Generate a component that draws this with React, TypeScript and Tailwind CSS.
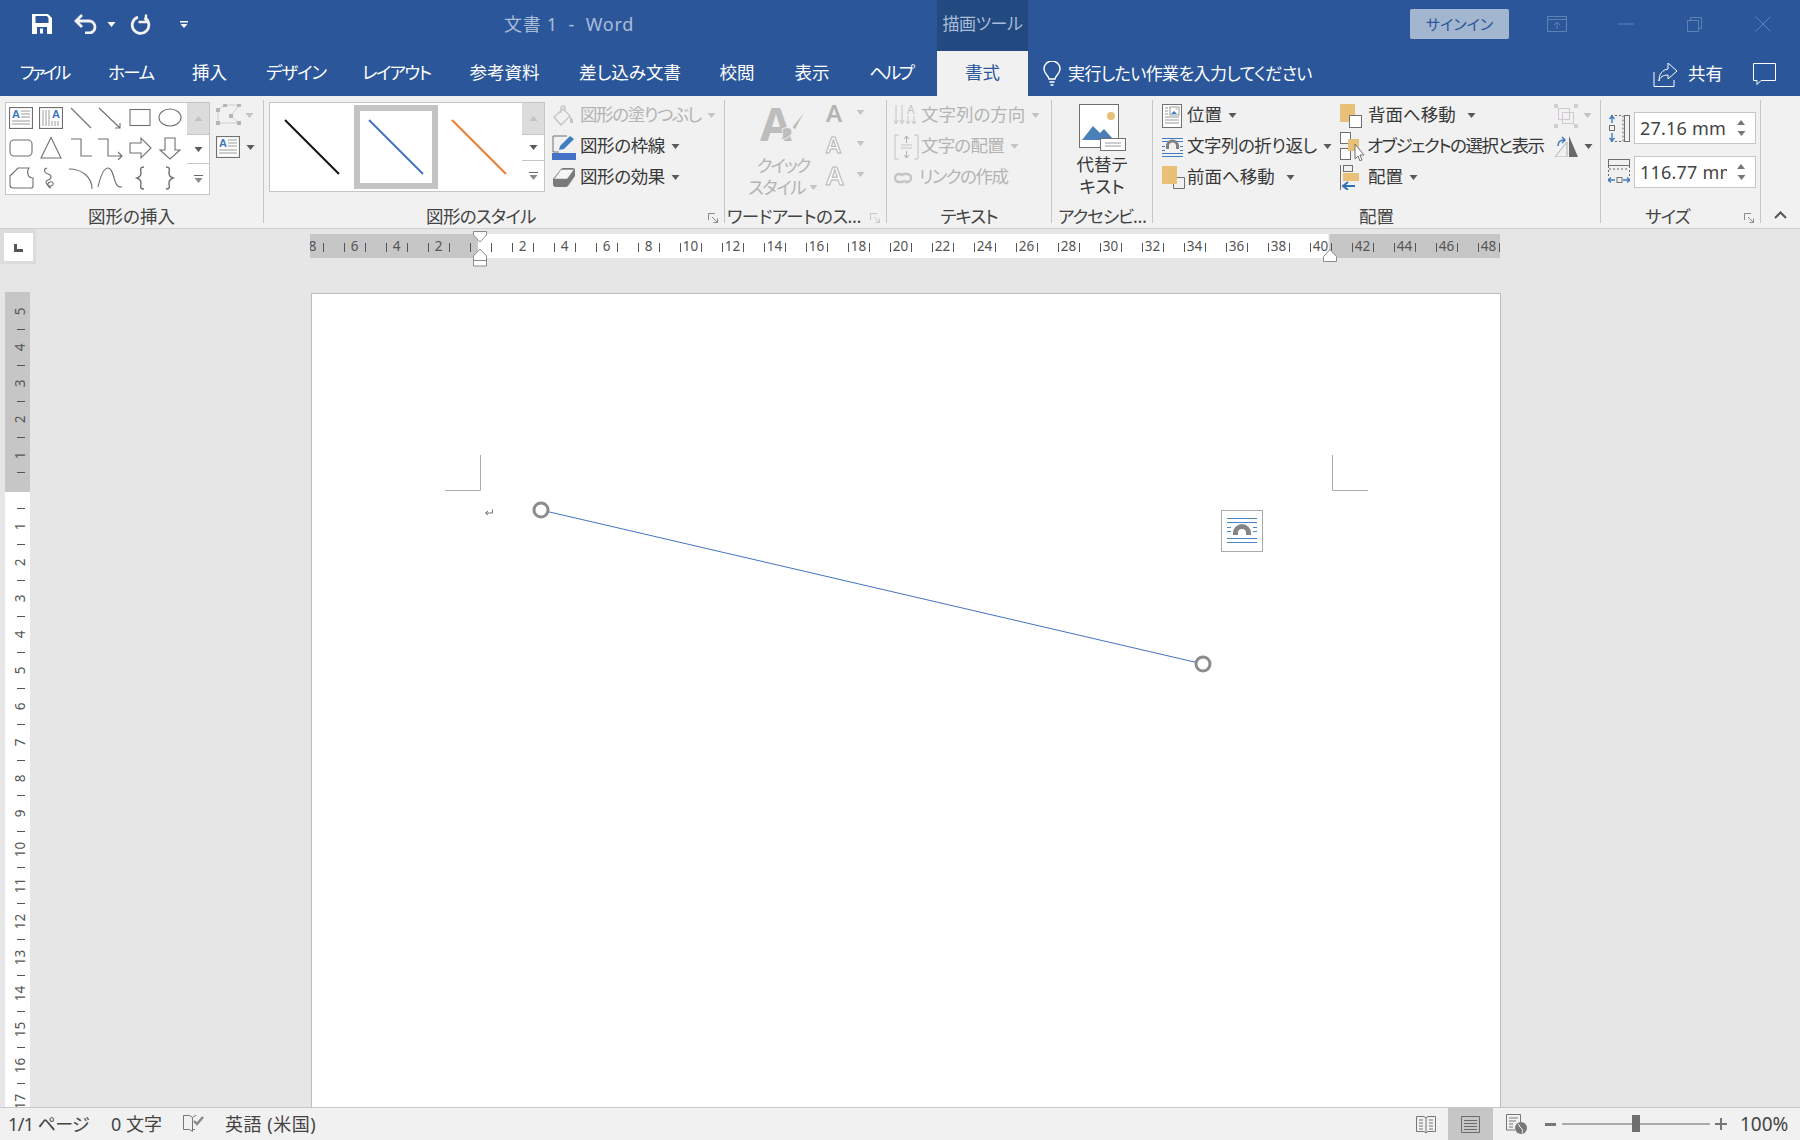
import React from 'react';

const G = '#707070';
const BLUE = '#3f7cc0';
const TAN = '#e8c078';
const DIS = '#c4c4c4';

const Caret = ({ c = '#5a5a5a', className = '' }: { c?: string; className?: string }) => (
  <svg width="9" height="5" viewBox="0 0 9 5" className={`shrink-0 ${className}`}>
    <path d="M.5 0h8L4.5 5z" fill={c} />
  </svg>
);

const Launcher = ({ c = '#8a8a8a' }: { c?: string }) => (
  <svg width="10" height="10" viewBox="0 0 10 10" fill="none" stroke={c} className="absolute right-[6px] top-[8px]">
    <path d="M.5 7V.5H7M4 4l5 5M9.5 5.5v4h-4" />
  </svg>
);

// ---- gallery shapes ----
const s26 = { width: 26, height: 24, viewBox: '0 0 26 24', fill: 'none', stroke: G, strokeWidth: 1.1 };

const TextBoxIcon = () => (
  <svg width="24" height="22" viewBox="0 0 24 22" fill="none" stroke={G} strokeWidth="1">
    <rect x=".5" y=".5" width="23" height="21" fill="#fff" strokeWidth="1.2" />
    <text x="3" y="11" fontSize="11" fontWeight="700" fill="#3a76bd" stroke="none" fontFamily="Liberation Sans">A</text>
    <path d="M12 4h9M12 7h9M12 10h9M3 14h18M3 17h18" stroke="#9a9a9a" />
  </svg>
);

const ShapeIcons: React.ReactNode[] = [
  <TextBoxIcon key="a" />,
  <svg key="b" width="24" height="22" viewBox="0 0 24 22" fill="none" stroke="#9a9a9a" strokeWidth="1">
    <rect x=".5" y=".5" width="23" height="21" stroke={G} strokeWidth="1.2" />
    <path d="M4 3v16M7 3v16M10 3v16M13 14v5M16 14v5M19 14v5" />
    <text x="13" y="11" fontSize="11" fontWeight="700" fill="#3a76bd" stroke="none" fontFamily="Liberation Sans">A</text>
  </svg>,
  <svg key="c" {...s26}><path d="M3 2l20 20" /></svg>,
  <svg key="d" {...s26}><path d="M2 2l21 20M23 17v5h-5" /></svg>,
  <svg key="e" {...s26}><rect x="3" y="3.5" width="20" height="16" /></svg>,
  <svg key="f" {...s26}><ellipse cx="13" cy="11.5" rx="11" ry="8.5" /></svg>,
  <svg key="g" {...s26}><rect x="2" y="4" width="22" height="16" rx="4" /></svg>,
  <svg key="h" {...s26}><path d="M13 1.5L23 22H3z" /></svg>,
  <svg key="i" {...s26}><path d="M3 3h10v17h11" /></svg>,
  <svg key="j" {...s26}><path d="M1 3h10v17h14M21 16l4 4-4 4" /></svg>,
  <svg key="k" {...s26}><path d="M3 7h11V2l10 10-10 10v-5H3z" /></svg>,
  <svg key="l" {...s26}><path d="M8 2h10v12h5L13 23 3 14h5z" /></svg>,
  <svg key="m" {...s26}><path d="M2 10l8-8h11c-3 4-1 10 4 10v8a2 2 0 0 1-2 2H5a3 3 0 0 1-3-3z" /></svg>,
  <svg key="n" {...s26}><path d="M9 2c-4 1-3 5 1 6s4 5 0 6-1 7 3 6 2-5-1-4-3 5 1 6" /></svg>,
  <svg key="o" {...s26}><path d="M1 3c13 0 23 8 23 20" /></svg>,
  <svg key="p" {...s26}><path d="M1 21C4 8 7 2 11 2s5 7 7 13 4 6 7 6" /></svg>,
  <svg key="q" {...s26} strokeWidth="1.4"><path d="M17 1c-5 0-3 3-3 6s-1 4-4 5c3 1 4 2 4 5s-2 6 3 6" /></svg>,
  <svg key="r" {...s26} strokeWidth="1.4"><path d="M9 1c5 0 3 3 3 6s1 4 4 5c-3 1-4 2-4 5s2 6-3 6" /></svg>,
];

const ScrollCol = () => (
  <div className="w-[22px] shrink-0 flex flex-col">
    <div className="h-[32px] flex items-center justify-center border-b border-[#c6c6c6] bg-[#dcdcdc]">
      <svg width="9" height="5" viewBox="0 0 9 5"><path d="M4.5 0l4 5h-8z" fill="#c2c2c2" /></svg>
    </div>
    <div className="flex-1 bg-white flex items-center justify-center border-b border-[#c6c6c6]"><Caret /></div>
    <div className="h-[30px] bg-white flex flex-col items-center justify-center gap-[2px]">
      <div className="w-[9px] h-px bg-[#6a6a6a]" />
      <Caret c="#8a8a8a" />
    </div>
  </div>
);

// ---- ribbon row icons ----
const FillIcon = () => (
  <svg width="22" height="22" viewBox="0 0 22 22" fill="none" stroke={DIS} strokeWidth="1.3">
    <path d="M11 4L2 12l7 8 9-9zM9 8V3a2 2 0 0 1 4 0v3" /><path d="M18 11l3 4v3h-3z" fill={DIS} stroke="none" />
  </svg>
);
const OutlineIcon = () => (
  <svg width="24" height="26" viewBox="0 0 24 26" fill="none">
    <path d="M1 18V2h14" stroke={G} /><path d="M1 18h6" stroke={G} />
    <path d="M7 16l1-4L18 2l4 3-10 10z" fill="#3f7cc0" /><rect x="0" y="19" width="24" height="7" fill="#4472c4" />
  </svg>
);
const EffectIcon = () => (
  <svg width="24" height="23" viewBox="0 0 24 23">
    <path d="M1 13L9 3a3 3 0 0 1 2-1h10a2 2 0 0 1 2 2v6l-7 10a3 3 0 0 1-2 1H4a3 3 0 0 1-3-3z" fill="#7a7a7a" />
    <path d="M2 13L9 3.5h13L16 12a2 2 0 0 1-2 1z" fill="#f6f6f6" stroke="#8a8a8a" strokeWidth=".6" />
  </svg>
);
const LinkIcon = () => (
  <svg width="18" height="12" viewBox="0 0 18 12" fill="none" stroke={DIS} strokeWidth="2.4">
    <path d="M7 2H5a4 4 0 0 0 0 8h3a4 4 0 0 0 3-2M11 10h2a4 4 0 0 0 0-8h-3a4 4 0 0 0-3 2" />
  </svg>
);
const DirectionIcon = () => (
  <svg width="25" height="24" viewBox="0 0 25 24" fill="none" stroke={DIS}>
    <path d="M2 1v18M0 16l2 4 2-4M8 1v18M6 16l2 4 2-4M14 12v8M12 17l2 3 2-3M20 12v8M18 17l2 3 2-3" />
    <text x="13" y="10" fontSize="12" fill={DIS} stroke="none" fontFamily="Noto Sans">A</text>
  </svg>
);
const AlignTextIcon = () => (
  <svg width="25" height="26" viewBox="0 0 25 26" fill="none" stroke={DIS}>
    <path d="M5 1H1v24h4M20 1h4v24h-4M7 11h11M7 14h11" />
    <path d="M12.5 2v7M10 5l2.5-3L15 5M12.5 17v7M10 21l2.5 3 2.5-3" stroke="#aeaeae" />
  </svg>
);
const PositionIcon = () => (
  <svg width="20" height="24" viewBox="0 0 20 24" fill="none">
    <rect x=".5" y=".5" width="19" height="23" stroke={G} fill="#fff" />
    <path d="M3 4h3M3 7h3M3 10h3M3 13h14M3 16h14M3 19h14" stroke="#9a9a9a" />
    <rect x="8" y="3" width="9" height="8" stroke="#9a9a9a" />
    <circle cx="14.5" cy="5" r="1" fill={TAN} /><path d="M9 10l3-3 3 3z" fill={BLUE} />
  </svg>
);
const WrapIcon = () => (
  <svg width="21" height="22" viewBox="0 0 21 22" fill="none" stroke={BLUE}>
    <path d="M0 2.5h21M0 5.5h21M0 10.5h3M18 10.5h3M0 14.5h3M18 14.5h3M0 17.5h21M0 20.5h21" />
    <path d="M4 16v-3a6.5 6.5 0 0 1 13 0v3h-3v-3a3.5 3.5 0 0 0-7 0v3z" fill="#808080" stroke="none" transform="translate(0 -3)" />
  </svg>
);
const FrontIcon = () => (
  <svg width="23" height="23" viewBox="0 0 23 23" fill="none">
    <path d="M15 11.5h7.5v11h-11V17" stroke={G} /><rect x="0" y="0" width="15" height="18" fill={TAN} />
  </svg>
);
const BackIcon = () => (
  <svg width="22" height="24" viewBox="0 0 22 24" fill="none">
    <rect x="0" y="0" width="15" height="18" fill={TAN} /><rect x="9.5" y="11.5" width="12" height="12" fill="#fff" stroke={G} />
  </svg>
);
const SelectIcon = () => (
  <svg width="25" height="29" viewBox="0 0 25 29" fill="none">
    <rect x=".5" y=".5" width="10" height="11" fill="#fff" stroke={G} /><rect x=".5" y="16.5" width="10" height="11" fill="#fff" stroke={G} />
    <rect x="8" y="7" width="11" height="12" fill={TAN} />
    <path d="M15 12v15l3-3 2 5 2-1-2-5h4z" fill="#fff" stroke={G} />
  </svg>
);
const AlignIcon = () => (
  <svg width="20" height="25" viewBox="0 0 20 25" fill="none">
    <path d="M.5 0v25" stroke={G} /><rect x="3.5" y=".5" width="9" height="6" stroke={G} />
    <rect x="3" y="8" width="16" height="8" fill={TAN} />
    <path d="M15 21H4M8 17l-5 4 5 4" stroke="#2f72b5" strokeWidth="2" />
  </svg>
);
const GroupIcon = () => (
  <svg width="24" height="24" viewBox="0 0 24 24" fill="none" stroke="#d0c8d4">
    <rect x="4.5" y="4.5" width="11" height="11" /><rect x="8.5" y="8.5" width="11" height="11" />
    <path d="M0 0h4v4H0zM20 0h4v4h-4zM0 20h4v4H0zM20 20h4v4h-4z" fill="#cfcfcf" stroke="none" />
  </svg>
);
const RotateIcon = () => (
  <svg width="25" height="21" viewBox="0 0 25 21" fill="none">
    <path d="M13 6v15H1z" stroke="#b0b0b0" /><path d="M15 0v21h9z" fill="#6a6a6a" />
    <path d="M4 10c0-4 2-6 6-6M8 1l3 3-3 3" stroke="#3f7cc0" strokeWidth="1.5" />
  </svg>
);
const HeightIcon = () => (
  <svg width="22" height="27" viewBox="0 0 22 27" fill="none">
    <path d="M3 .5h12M3 26.5h12M15 .5v26" stroke="#666" strokeDasharray="2 2" />
    <rect x="16.5" y=".5" width="5" height="26" stroke={G} />
    <rect x="1.5" y="10.5" width="5" height="5" stroke={G} />
    <path d="M4 1v7M1.5 4L4 1l2.5 3M4 18v8M1.5 23L4 26l2.5-3" stroke="#3f7cc0" strokeWidth="1.4" />
  </svg>
);
const WidthIcon = () => (
  <svg width="22" height="26" viewBox="0 0 22 26" fill="none">
    <rect x=".5" y=".5" width="21" height="6" stroke={G} />
    <path d="M.5 7v12M21.5 7v12M1 10h20" stroke="#666" strokeDasharray="2 2" />
    <rect x="9" y="18.5" width="5" height="5" stroke={G} />
    <path d="M0 21h7M3 18.5L0 21l3 2.5M15 21h7M19 18.5l3 2.5-3 2.5" stroke="#3f7cc0" strokeWidth="1.4" />
  </svg>
);

const Row = ({ icon, label, slot, caretGap = 6, off = false, noCaret = false, track = '' }: {
  icon: React.ReactNode; label: string; slot: number; caretGap?: number; off?: boolean; noCaret?: boolean; track?: string;
}) => (
  <div className={`flex items-center h-[31px] whitespace-nowrap ${off ? 'text-[#b4b4b4]' : ''}`}>
    <div className="shrink-0 flex items-center" style={{ width: slot }}>{icon}</div>
    <span className={`mb-[2px] ${track}`}>{label}</span>
    {!noCaret && <span style={{ marginLeft: caretGap }}><Caret c={off ? DIS : '#5a5a5a'} /></span>}
  </div>
);

const Group = ({ w, label, children, launcher, labelClass = 'text-center', launcherColor }: {
  w: number; label: string; children: React.ReactNode; launcher?: boolean; labelClass?: string; launcherColor?: string;
}) => (
  <>
    <div className="flex flex-col shrink-0" style={{ width: w }}>
      <div className="h-[105px] flex">{children}</div>
      <div className={`relative h-[22px] leading-[22px] text-[17.5px] text-[#444] whitespace-nowrap ${labelClass}`}>
        {label}
        {launcher && <Launcher c={launcherColor} />}
      </div>
    </div>
    <div className="w-px h-[123px] bg-[#c6c6c6] shrink-0" />
  </>
);

const SizeInput = ({ value, icon }: { value: string; icon: React.ReactNode }) => (
  <div className="flex items-center h-[32px]">
    <div className="w-[33px] pl-[7px] shrink-0">{icon}</div>
    <div className="w-[122px] h-[32px] bg-white border border-[#c6c6c6] flex items-center pl-[5px] pr-[9px]">
      <div className="w-[87px] overflow-hidden whitespace-nowrap text-[18px] tracking-[0.2px] text-[#444]">{value}</div>
      <div className="flex flex-col gap-[6px] shrink-0 ml-auto">
        <svg width="8" height="5" viewBox="0 0 8 5"><path d="M4 0l4 5H0z" fill="#777" /></svg>
        <Caret c="#777" />
      </div>
    </div>
  </div>
);

const TitleBar = () => (
  <div className="h-[51px] shrink-0 bg-[#2b579a] flex">
    <div className="w-[937px] shrink-0 flex items-center pb-[3px]">
      <svg width="20" height="20" viewBox="0 0 20 20" className="ml-[32px]">
        <path fillRule="evenodd" d="M0 0h16l4 4v16H0zM3.5 2v7h13V4L15 2zM5 13v7h10v-7z" fill="#fff" />
        <rect x="8" y="14.5" width="3" height="5" fill="#fff" />
      </svg>
      <svg width="23" height="20" viewBox="0 0 23 20" fill="none" stroke="#f2f2f2" strokeWidth="2.8" className="ml-[22px]">
        <path d="M2 7h13a6 6 0 0 1 0 12h-4M8 1L2 7l6 6" />
      </svg>
      <Caret c="#fff" className="ml-[10px]" />
      <svg width="21" height="21" viewBox="0 0 21 21" fill="none" stroke="#f2f2f2" strokeWidth="2.8" className="ml-[14px]">
        <path d="M8 3.2a8.3 8.3 0 1 0 6.5.6" />
        <path d="M16 .5V8H8.5" strokeWidth="2.4" />
      </svg>
      <svg width="8" height="7" viewBox="0 0 8 7" className="ml-[29px]">
        <path d="M0 0h8v1.4H0zM.5 3h7L4 7z" fill="#fff" />
      </svg>
      <div className="ml-[316px] text-[18px] text-[#a9bcd8] whitespace-pre tracking-[0.7px]">文書 1  -  Word</div>
    </div>
    <div className="w-[91px] shrink-0 bg-[#234a80] flex items-center justify-center pb-[3px] text-[17px] tracking-[-0.5px] text-[#a9bcd8] whitespace-nowrap">描画ツール</div>
    <div className="flex-1 flex items-center pb-[5px] pt-[2px]">
      <div className="ml-[382px] w-[99px] h-[30px] rounded-[2px] bg-[#a3b6d0] flex items-center justify-center text-[15px] text-[#2b579a]">サインイン</div>
      <svg width="20" height="16" viewBox="0 0 20 16" fill="none" stroke="#5f82b5" className="ml-[38px]">
        <path d="M.5.5h19v15H.5zM.5 3.5h19M10 13V6M7 9l3-3 3 3" />
      </svg>
      <svg width="16" height="2" viewBox="0 0 16 2" className="ml-[51px]"><path d="M0 1h16" stroke="#5f82b5" /></svg>
      <svg width="15" height="15" viewBox="0 0 15 15" fill="none" stroke="#5f82b5" className="ml-[53px]">
        <path d="M.5 3.5h11v11H.5zM3.5 3V.5h11v11H12" />
      </svg>
      <svg width="16" height="16" viewBox="0 0 16 16" fill="none" stroke="#5f82b5" className="ml-[53px]">
        <path d="M.5.5l15 15M15.5.5l-15 15" />
      </svg>
    </div>
  </div>
);

const tabs = [
  { t: 'ファイル', w: 50, c: 'tracking-[-3px]' }, { t: 'ホーム', w: 45, c: 'tracking-[-1.5px]' }, { t: '挿入', w: 35, c: '' },
  { t: 'デザイン', w: 57, c: 'tracking-[-1px]' }, { t: 'レイアウト', w: 68, c: 'tracking-[-1.6px]' }, { t: '参考資料', w: 71, c: '' },
  { t: '差し込み文書', w: 101, c: '' }, { t: '校閲', w: 36, c: '' }, { t: '表示', w: 36, c: '' }, { t: 'ヘルプ', w: 44, c: 'tracking-[-2.3px]' },
];

const TabBar = () => (
  <div className="h-[45px] shrink-0 bg-[#2b579a] flex items-center text-[17.5px] text-white">
    <div className="flex gap-[39px] pl-[19px] pb-[2px] w-[937px] shrink-0">
      {tabs.map((x) => (
        <div key={x.t} className={`whitespace-nowrap text-center ${x.c}`} style={{ width: x.w }}>{x.t}</div>
      ))}
    </div>
    <div className="w-[91px] h-full shrink-0 bg-[#f1f1f1] flex items-center justify-center pb-[2px] text-[#2b579a]">書式</div>
    <svg width="18" height="26" viewBox="0 0 18 26" fill="none" stroke="#fff" strokeWidth="1.4" className="ml-[15px] shrink-0">
      <path d="M6 18c0-3-5-5-5-10a8 8 0 0 1 16 0c0 5-5 7-5 10zM6.5 21h5M7.5 24h3" />
    </svg>
    <div className="ml-[7px] w-[242px] whitespace-nowrap text-[17px] tracking-[-0.6px]">実行したい作業を入力してください</div>
    <svg width="26" height="26" viewBox="0 0 26 26" fill="none" stroke="#fff" className="ml-[343px] shrink-0">
      <path d="M1 11v14.5h20V19" /><path d="M15 2l9 8-9 8v-4c-5 0-8 2-9 6 0-7 3-11 9-12z" />
    </svg>
    <div className="ml-[9px] whitespace-nowrap">共有</div>
    <svg width="23" height="24" viewBox="0 0 23 24" fill="none" stroke="#fff" className="ml-[30px] shrink-0">
      <path d="M.5 1.5h22v17H8l-4 4v-4H.5z" />
    </svg>
  </div>
);

const Ribbon = () => (
  <div className="h-[133px] shrink-0 bg-[#f1f1f1] border-b border-[#d0d0d0] flex pt-[4px] text-[17.5px] text-[#383838]">
    <Group w={263} label="図形の挿入">
      <div className="ml-[5px] mt-[2px] w-[205px] h-[93px] border border-[#c6c6c6] bg-white flex shrink-0">
        <div className="w-[180px] grid grid-cols-6 content-start">
          {ShapeIcons.map((ic, i) => (
            <div key={i} className="h-[30px] flex items-center justify-center">{ic}</div>
          ))}
        </div>
        <div className="ml-[2px] flex"><ScrollCol /></div>
      </div>
      <div className="ml-[6px] flex flex-col gap-[10px] pt-[4px]">
        <div className="flex items-center gap-[4px]">
          <svg width="25" height="22" viewBox="0 0 25 22" fill="none" stroke="#cfcfcf">
            <path d="M2 6l7-5h14l-8 11 8 7H2z" />
            <path d="M0 4h4v4H0zM7 0h4v3H7zM21 0h4v3h-4zM13 10h4v4h-4zM21 17h4v4h-4zM0 17h4v4H0z" fill="#b5b5b5" stroke="none" />
          </svg>
          <Caret c={DIS} />
        </div>
        <div className="flex items-center gap-[6px]"><TextBoxIcon /><Caret /></div>
      </div>
    </Group>

    <Group w={460} label="図形のスタイル" labelClass="text-center pr-[26px] tracking-[-0.7px]" launcher>
      <div className="ml-[5px] mt-[2px] w-[276px] h-[90px] border border-[#c6c6c6] bg-white flex shrink-0">
        <div className="w-[253px] flex items-center justify-between pl-[14px] pr-[15px]">
          <svg width="56" height="56" viewBox="0 0 56 56"><path d="M1 1l54 54" stroke="#111" strokeWidth="2" /></svg>
          <div className="w-[84px] h-[84px] border-[6px] border-[#c4c4c4] flex items-center justify-center">
            <svg width="56" height="56" viewBox="0 0 56 56"><path d="M1 1l54 54" stroke="#4472c4" strokeWidth="2" /></svg>
          </div>
          <svg width="56" height="56" viewBox="0 0 56 56"><path d="M1 1l54 54" stroke="#ed7d31" strokeWidth="2" /></svg>
        </div>
        <ScrollCol />
      </div>
      <div className="ml-[7px]">
        <Row icon={<FillIcon />} label="図形の塗りつぶし" slot={28} off track="tracking-[-1.4px]" />
        <Row icon={<OutlineIcon />} label="図形の枠線" slot={28} track="tracking-[-0.4px]" />
        <Row icon={<EffectIcon />} label="図形の効果" slot={28} track="tracking-[-0.4px]" />
      </div>
    </Group>

    <Group w={161} label="ワードアートのス…" labelClass="pl-[2px] tracking-[-0.6px]" launcher launcherColor="#c8c8c8">
      <div className="w-[96px] pl-[20px] flex flex-col items-center shrink-0 text-[#b4b4b4] leading-[22px]">
        <div className="relative w-[46px] h-[46px] mb-[8px]">
          <div className="text-[46px] leading-[46px] font-bold text-[#bdbdbd]">A</div>
          <svg width="26" height="34" viewBox="0 0 26 34" className="absolute right-0 top-[10px]">
            <path d="M26 0L12 17l3 3zM2 19c6-3 10-1 10 3s-6 7-12 8c3-2 3-6 2-11z" fill="#bdbdbd" stroke="#f1f1f1" />
          </svg>
        </div>
        <div className="whitespace-nowrap tracking-[-2px]">クイック</div>
        <div className="whitespace-nowrap flex items-center gap-[4px]"><span className="tracking-[-1.5px]">スタイル</span><Caret c={DIS} /></div>
      </div>
      <div className="ml-[5px] -mt-[3px]">
        {[
          'text-[24px] text-[#b4b4b4]',
          'text-[22px] text-white [-webkit-text-stroke:1px_#b4b4b4]',
          'text-[26px] text-white [-webkit-text-stroke:1px_#b4b4b4]',
        ].map((c, i) => (
          <div key={i} className="h-[31px] flex items-center">
            <div className={`w-[30px] font-semibold leading-none ${c}`}>A</div>
            <Caret c={DIS} />
          </div>
        ))}
      </div>
    </Group>

    <Group w={164} label="テキスト" labelClass="text-center tracking-[-1px]">
      <div className="pl-[7px]">
        <Row icon={<DirectionIcon />} label="文字列の方向" slot={27} off />
        <Row icon={<AlignTextIcon />} label="文字の配置" slot={27} off track="tracking-[-0.8px]" />
        <Row icon={<LinkIcon />} label="リンクの作成" slot={25} off noCaret track="tracking-[-1.5px]" />
      </div>
    </Group>

    <Group w={100} label="アクセシビ…" labelClass="text-center tracking-[-1px]">
      <div className="w-full flex flex-col items-center leading-[22px] pt-[4px]">
        <svg width="47" height="47" viewBox="0 0 47 47" fill="none" className="mb-[2px]">
          <rect x=".5" y=".5" width="39" height="43" fill="#fff" stroke={G} />
          <circle cx="32" cy="12" r="4" fill={TAN} />
          <path d="M3 36l11-14 7 7 4-4 10 11z" fill="#4a80b8" />
          <rect x="21.5" y="34.5" width="25" height="12" fill="#fff" stroke={G} />
          <path d="M26 39h16M26 42h16" stroke="#9a9a9a" />
        </svg>
        <div>代替テ</div>
        <div>キスト</div>
      </div>
    </Group>

    <Group w={447} label="配置">
      <div className="pl-[9px] w-[187px] shrink-0">
        <Row icon={<PositionIcon />} label="位置" slot={25} />
        <Row icon={<WrapIcon />} label="文字列の折り返し" slot={25} track="tracking-[-0.5px]" />
        <Row icon={<FrontIcon />} label="前面へ移動" slot={25} caretGap={11} />
      </div>
      <div className="w-[214px] shrink-0">
        <Row icon={<BackIcon />} label="背面へ移動" slot={28} caretGap={11} />
        <Row icon={<SelectIcon />} label="オブジェクトの選択と表示" slot={27} noCaret track="tracking-[-1.5px]" />
        <Row icon={<AlignIcon />} label="配置" slot={28} />
      </div>
      <div>
        <div className="h-[31px] flex items-center gap-[5px]"><GroupIcon /><Caret c={DIS} /></div>
        <div className="h-[31px] flex items-center gap-[5px]"><RotateIcon /><Caret /></div>
      </div>
    </Group>

    <Group w={159} label="サイズ" labelClass="text-center pr-[26px] tracking-[-1px]" launcher>
      <div className="flex flex-col gap-[12px] pt-[12px]">
        <SizeInput value="27.16 mm" icon={<HeightIcon />} />
        <SizeInput value="116.77 mm" icon={<WidthIcon />} />
      </div>
    </Group>

    <div className="flex-1 flex items-end justify-center pb-[9px]">
      <svg width="13" height="8" viewBox="0 0 13 8" fill="none" stroke="#555" strokeWidth="2"><path d="M1 7l5.5-5.5L12 7" /></svg>
    </div>
  </div>
);

const rulerCols = Array.from({ length: 58 }, (_, i) => i - 8);
const rulerRows = [5, 4, 3, 2, 1, 0, ...Array.from({ length: 17 }, (_, i) => i + 1)];

const HRuler = () => (
  <div className="relative ml-[274px] mt-[5px] w-[1190px] h-[24px] bg-[linear-gradient(90deg,#c6c6c6_168px,#fff_168px,#fff_1018px,#c6c6c6_1020px)]">
    <div className="h-full overflow-hidden">
      <div className="flex h-full -ml-[8.5px] text-[13.5px] text-[#555]">
        {rulerCols.map((n) => (
          <div key={n} className="w-[21px] shrink-0 flex items-center pt-[2px]">
            <div className="w-px h-[9px] bg-[#555] shrink-0" />
            <div className="flex-1 text-center leading-none">{n !== 0 && n % 2 === 0 ? Math.abs(n) : ''}</div>
          </div>
        ))}
      </div>
    </div>
    <svg width="14" height="37" viewBox="0 0 14 37" fill="#fff" stroke="#8c8c8c" className="absolute left-[163px] -top-[4px]">
      <path d="M.5 1.5h13V5L7 12 .5 5zM7 19l6.5 7v10H.5V26zM.5 30.5h13" />
    </svg>
    <svg width="14" height="13" viewBox="0 0 14 13" fill="#fff" stroke="#8c8c8c" className="absolute left-[1013px] top-[15px]">
      <path d="M7 .5l6.5 7v5H.5v-5z" />
    </svg>
  </div>
);

const VRuler = () => (
  <div className="ml-[5px] w-[25px] shrink-0 h-[815px] -mt-px pt-[2px] overflow-hidden bg-[linear-gradient(180deg,#c6c6c6_200px,#fff_200px)] text-[13.5px] text-[#555]">
    {rulerRows.map((n, i) => (
      <div key={i} className="h-[35.9px] flex flex-col items-center pl-[7px]">
        <div className="flex-1 flex items-center justify-center leading-none -rotate-90">{n !== 0 ? n : ''}</div>
        <div className="h-px w-[8px] bg-[#555] shrink-0" />
      </div>
    ))}
  </div>
);

const Page = () => (
  <div className="relative ml-[281px] w-[1190px] h-[900px] bg-white border border-[#bdbdbd] shrink-0">
    <svg width="1188" height="600" fill="none" className="absolute left-0 top-0">
      <path d="M168.5 161v35.5H133M1020.5 161v35.5H1056" stroke="#ababab" />
      <path d="M229 216L891 370" stroke="#4472c4" strokeWidth="1" />
      <circle cx="229" cy="216" r="7" fill="#fff" stroke="#8c8c8c" strokeWidth="3" />
      <circle cx="891" cy="370" r="7" fill="#fff" stroke="#8c8c8c" strokeWidth="3" />
      <path d="M180.5 215.5v3.5h-7M176 217l-2.5 2 2.5 2" stroke="#777" />
    </svg>
    <div className="absolute left-[909px] top-[216px] w-[42px] h-[42px] bg-white border border-[#ababab] flex items-center justify-center">
      <svg width="30" height="26" viewBox="0 0 30 26" fill="none" stroke="#4a86c5">
        <path d="M0 .5h30M0 4.5h30M0 9.5h4M26 9.5h4M0 13.5h4M26 13.5h4M0 20.5h30M0 24.5h30" />
        <path d="M6 17v-2a9 9 0 0 1 18 0v2h-5v-2a4 4 0 0 0-8 0v2z" fill="#858585" stroke="none" />
      </svg>
    </div>
  </div>
);

const StatusBar = () => (
  <div className="h-[33px] shrink-0 bg-[#f1f1f1] border-t border-[#c6c6c6] flex items-center text-[18px] text-[#444]">
    <div className="ml-[8px] whitespace-nowrap tracking-[-0.6px]">1/1 ページ</div>
    <div className="ml-[22px] whitespace-nowrap">0 文字</div>
    <svg width="21" height="20" viewBox="0 0 21 20" fill="none" stroke="#777" className="ml-[21px]">
      <path d="M.5 1.5h6l3 2v14l-3-2h-6zM9.5 3.5l3-2h1M12 15.5h-2.5" />
      <path d="M11 7l3 3 6-7" stroke="#888" strokeWidth="2.4" />
    </svg>
    <div className="ml-[21px] whitespace-nowrap tracking-[0.5px]">英語 (米国)</div>
    <div className="ml-auto h-full flex items-center">
      <svg width="20" height="19" viewBox="0 0 20 19" fill="none" stroke="#777">
        <path d="M10 3L8 1.5H.5v15H8l2 1.5 2-1.5h7.5v-15H12zM10 3v15M3 5h4M3 8h4M3 11h4M3 14h4M13 5h4M13 8h4M13 11h4M13 14h4" />
      </svg>
      <div className="ml-[12px] w-[45px] h-full bg-[#c6c6c6] flex items-center justify-center">
        <svg width="19" height="17" viewBox="0 0 19 17" fill="none" stroke="#6a6a6a"><path d="M.5.5h18v16H.5zM3 4.5h13M3 7.5h13M3 10.5h13M3 13.5h13" /></svg>
      </div>
      <svg width="21" height="20" viewBox="0 0 21 20" fill="none" stroke="#777" className="ml-[13px]">
        <path d="M9 16H.5V.5h14V8M3 4h9M3 7h7M3 10h4M3 13h4" />
        <circle cx="15" cy="14" r="6" fill="#777" stroke="none" />
        <path d="M12 10c2 1 1 3 3 4s2 3 1 5" stroke="#f1f1f1" />
      </svg>
      <div className="ml-[18px] w-[11px] h-[3px] bg-[#777]" />
      <div className="ml-[6px] w-[148px] h-[2px] bg-[#ababab] relative">
        <div className="absolute left-[70px] -top-[8px] w-[8px] h-[17px] bg-[#6e6e6e]" />
      </div>
      <svg width="12" height="12" viewBox="0 0 12 12" className="ml-[5px]"><path d="M5 0h2v5h5v2H7v5H5V7H0V5h5z" fill="#777" /></svg>
      <div className="ml-[13px] mr-[10px] w-[50px] text-[19px] whitespace-nowrap">100%</div>
    </div>
  </div>
);

export default function App() {
  return (
    <div className="w-[1800px] h-[1140px] overflow-hidden flex flex-col bg-[#e6e6e6] font-['Noto_Sans','Noto_Sans_CJK_JP',sans-serif] [font-feature-settings:'palt']">
      <TitleBar />
      <TabBar />
      <Ribbon />
      <div className="flex-1 min-h-0 overflow-hidden flex flex-col">
        <div className="h-[64px] shrink-0 flex items-start">
          <div className="w-[36px] h-[35px] bg-[#dcdcdc] shrink-0 flex items-center justify-center">
            <div className="w-[29px] h-[28px] bg-white flex items-center justify-center">
              <div className="w-[9px] h-[8px] border-l-[3px] border-b-[3px] border-[#555] mt-[2px]" />
            </div>
          </div>
          <HRuler />
        </div>
        <div className="flex items-start">
          <VRuler />
          <Page />
        </div>
      </div>
      <StatusBar />
    </div>
  );
}
